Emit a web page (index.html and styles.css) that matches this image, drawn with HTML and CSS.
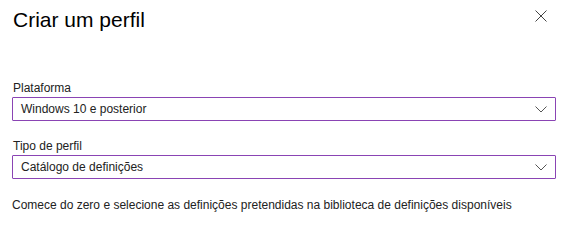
FILE: index.html
```html
<!DOCTYPE html>
<html lang="pt">
<head>
<meta charset="utf-8">
<title>Criar um perfil</title>
<link rel="stylesheet" href="styles.css">
</head>
<body>
<div class="panel">
  <div class="header">
    <h1 class="title">Criar um perfil</h1>
    <button class="close" aria-label="Fechar">
      <svg width="12" height="12" viewBox="0 0 12 12"><path d="M0.5 0.5 L11.5 11.5 M11.5 0.5 L0.5 11.5" stroke="#444" stroke-width="1" fill="none"/></svg>
    </button>
  </div>
  <div class="field first">
    <div class="label">Plataforma</div>
    <div class="select">
      <span class="value">Windows 10 e posterior</span>
      <svg class="chev" width="12" height="7" viewBox="0 0 12 7"><path d="M0.5 0.5 L6 6 L11.5 0.5" stroke="#555" stroke-width="1" fill="none"/></svg>
    </div>
  </div>
  <div class="field second">
    <div class="label">Tipo de perfil</div>
    <div class="select">
      <span class="value">Catálogo de definições</span>
      <svg class="chev" width="12" height="7" viewBox="0 0 12 7"><path d="M0.5 0.5 L6 6 L11.5 0.5" stroke="#555" stroke-width="1" fill="none"/></svg>
    </div>
  </div>
  <p class="desc">Comece do zero e selecione as definições pretendidas na biblioteca de definições disponíveis</p>
</div>
</body>
</html>
```
FILE: styles.css
```css
html, body {
  margin: 0;
  padding: 0;
  background: #fff;
}
body {
  font-family: "Liberation Sans", Arial, sans-serif;
  color: #222;
}
.panel {
  padding: 8px 20px 0 12px;
}
.header {
  display: flex;
  justify-content: space-between;
  align-items: flex-start;
}
.title {
  margin: 0 0 0 1px;
  font-size: 21px;
  line-height: 24px;
  font-weight: normal;
  color: #000;
}
.close {
  margin: 2px 9px 0 0;
  padding: 0;
  border: 0;
  background: none;
  width: 12px;
  height: 12px;
  display: flex;
}
.field.first {
  margin-top: 48px;
}
.field.second {
  margin-top: 17px;
}
.label {
  font-size: 12px;
  line-height: 16px;
  margin: 0 0 1px 1px;
  color: #222;
}
.select {
  box-sizing: border-box;
  height: 24px;
  border: 1px solid #8a44b4;
  border-radius: 1px;
  display: flex;
  align-items: center;
  justify-content: space-between;
  padding: 0 8px 0 8px;
}
.value {
  font-size: 12px;
  line-height: 22px;
  color: #222;
}
.chev {
  display: block;
  margin-right: 0;
}
.desc {
  margin: 18px 0 0 0;
  font-size: 12px;
  line-height: 16px;
  color: #222;
}
```
